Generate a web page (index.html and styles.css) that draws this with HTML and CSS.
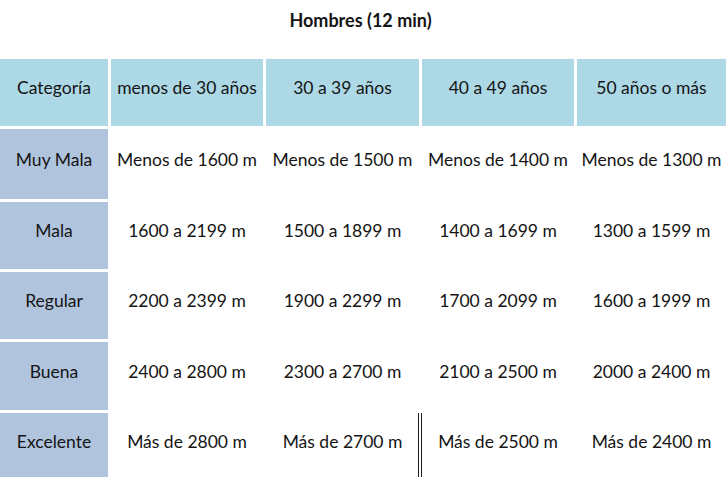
FILE: index.html
```html
<!DOCTYPE html>
<html lang="es">
<head>
<meta charset="utf-8">
<title>Hombres (12 min)</title>
<link rel="stylesheet" href="styles.css">
</head>
<body>
<div class="page">
  <h1 class="title">Hombres (12 min)</h1>
  <div class="table">
    <div class="cell head">Categoría</div>
    <div class="cell head">menos de 30 años</div>
    <div class="cell head">30 a 39 años</div>
    <div class="cell head">40 a 49 años</div>
    <div class="cell head">50 años o más</div>

    <div class="cell cat">Muy Mala</div>
    <div class="cell">Menos de 1600 m</div>
    <div class="cell">Menos de 1500 m</div>
    <div class="cell">Menos de 1400 m</div>
    <div class="cell">Menos de 1300 m</div>

    <div class="cell cat">Mala</div>
    <div class="cell">1600 a 2199 m</div>
    <div class="cell">1500 a 1899 m</div>
    <div class="cell">1400 a 1699 m</div>
    <div class="cell">1300 a 1599 m</div>

    <div class="cell cat">Regular</div>
    <div class="cell">2200 a 2399 m</div>
    <div class="cell">1900 a 2299 m</div>
    <div class="cell">1700 a 2099 m</div>
    <div class="cell">1600 a 1999 m</div>

    <div class="cell cat">Buena</div>
    <div class="cell">2400 a 2800 m</div>
    <div class="cell">2300 a 2700 m</div>
    <div class="cell">2100 a 2500 m</div>
    <div class="cell">2000 a 2400 m</div>

    <div class="cell cat">Excelente</div>
    <div class="cell">Más de 2800 m</div>
    <div class="cell">Más de 2700 m</div>
    <div class="cell divided">Más de 2500 m</div>
    <div class="cell">Más de 2400 m</div>
  </div>
</div>
</body>
</html>
```

FILE: styles.css
```css
html, body {
  margin: 0;
  padding: 0;
  background: #ffffff;
}

.page {
  width: 726px;
  height: 477px;
  overflow: hidden;
  font-family: "Lato", "Open Sans", sans-serif;
  color: #141414;
}

.title {
  margin: 0;
  height: 59px;
  box-sizing: border-box;
  padding-top: 8px;
  padding-right: 5px;
  font-size: 18px;
  font-weight: 700;
  text-align: center;
  line-height: 24px;
}

.table {
  display: grid;
  grid-template-columns: 108px 152px 153px 152px 149px;
  grid-template-rows: 67px 70px 67px 67px 68px 67px;
  column-gap: 3px;
  row-gap: 3px;
  font-size: 17.5px;
}

.cell {
  display: flex;
  align-items: center;
  justify-content: center;
  padding-bottom: 10px;
  box-sizing: border-box;
  white-space: nowrap;
  background: #ffffff;
}

.head {
  background: #add8e6;
}

.cat {
  background: #b0c4de;
}

.divided {
  margin-left: -4px;
  border-left: 4px double #1c1c1c;
}
```
